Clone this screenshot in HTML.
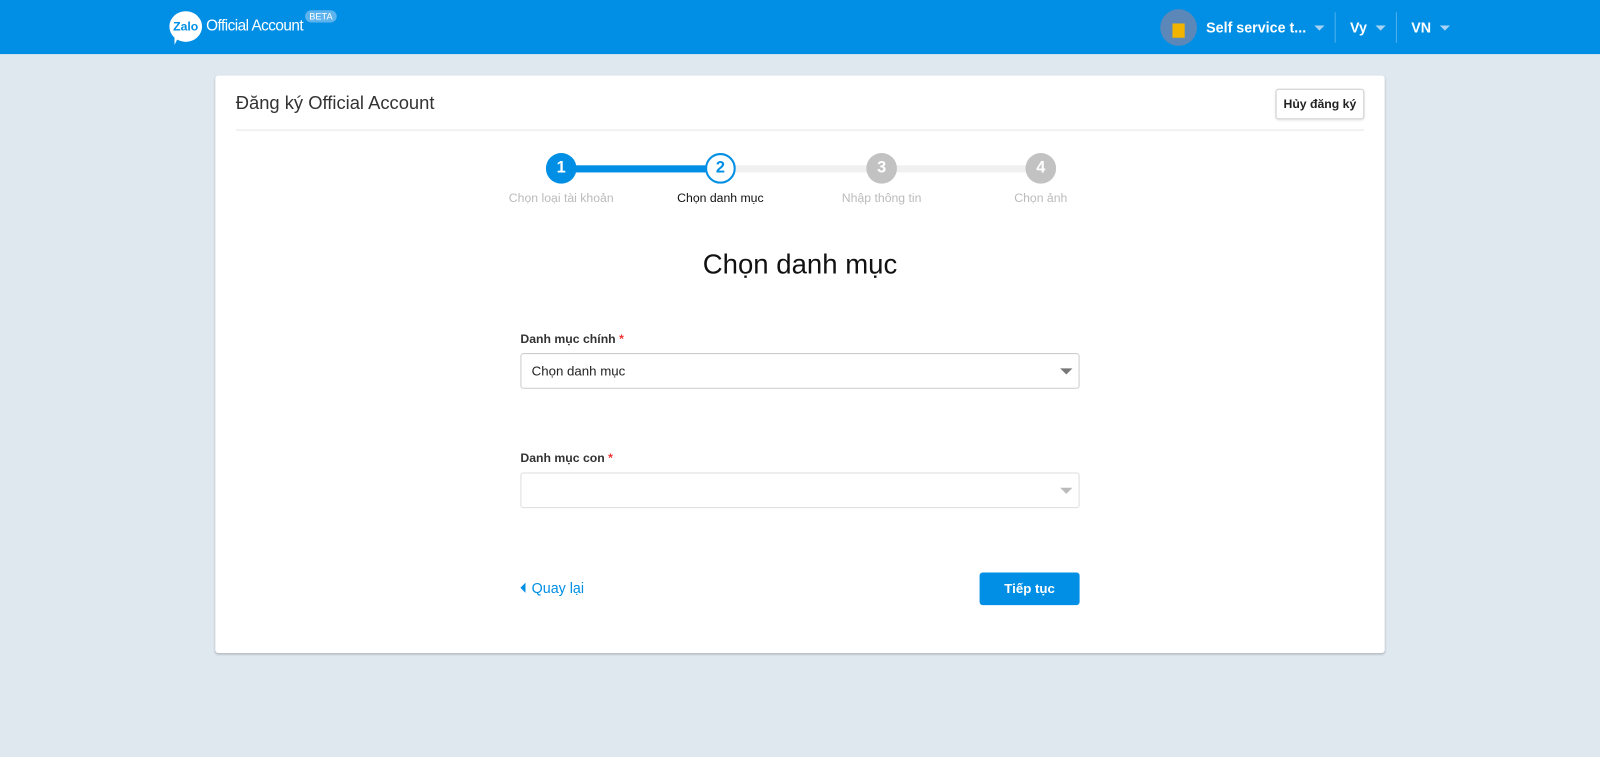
<!DOCTYPE html>
<html><head><meta charset="utf-8"><style>
*{box-sizing:border-box;margin:0;padding:0}
html,body{width:1600px;height:757px;overflow:hidden;background:#dfe7ef}
#w{position:absolute;left:0;top:0;width:1568px;height:742px;transform:scale(1.020408);transform-origin:0 0;font-family:"Liberation Sans",sans-serif}
.hdr{position:absolute;left:0;top:0;width:1568px;height:53px;background:#008fe5;color:#fff}
.abs{position:absolute}
.card{position:absolute;left:211px;top:74px;width:1146px;height:566px;background:#fff;border-radius:3px;box-shadow:0 1px 2px rgba(0,0,0,.2)}
.circ{position:absolute;width:30px;height:30px;border-radius:50%;color:#fff;font-weight:bold;font-size:16px;text-align:center;line-height:30px}
.lbl{position:absolute;font-size:12px;color:#bbb;text-align:center;width:160px;top:187px}
.sel{position:absolute;left:510px;width:548px;height:35px;border:1px solid #ccc;border-radius:3px;background:#fff;font-size:13px;color:#222;padding-left:10px;line-height:33px}
.arr{position:absolute;right:6px;top:14px;width:0;height:0;border-left:6px solid transparent;border-right:6px solid transparent;border-top:6px solid #777}
.fl{position:absolute;left:510px;font-size:12px;font-weight:bold;color:#333}
.fl span{color:#e33}
</style></head><body><div id="w">
<div class="hdr">
 <div class="abs" style="left:166px;top:11px;width:32px;height:30px;border-radius:50%;background:#fff;color:#008fe5;font-weight:bold;font-size:12px;text-align:center;line-height:30px">Zalo</div>
 <div class="abs" style="left:171px;top:36px;width:0;height:0;border-left:4px solid #fff;border-bottom:8px solid transparent"></div>
 <div class="abs" style="left:202px;top:17px;font-size:15px;letter-spacing:-0.5px">Official Account</div>
 <div class="abs" style="left:299px;top:10px;width:31px;height:12px;border-radius:6px;background:#5db3ee;font-size:9px;text-align:center;line-height:12px">BETA</div>
 <div class="abs" style="left:1137px;top:9px;width:36px;height:36px;border-radius:50%;background:#5b88b8"><div class="abs" style="left:12px;top:14px;width:12px;height:14px;background:#f2b400"></div></div>
 <div class="abs" style="left:1182px;top:19px;font-size:14px;font-weight:bold">Self service t...</div>
 <div class="abs" style="left:1288px;top:25px;border-left:5px solid transparent;border-right:5px solid transparent;border-top:5px solid #a9d3f3"></div>
 <div class="abs" style="left:1308px;top:12px;width:1px;height:30px;background:#4fb0ec"></div>
 <div class="abs" style="left:1323px;top:19px;font-size:14px;font-weight:bold">Vy</div>
 <div class="abs" style="left:1348px;top:25px;border-left:5px solid transparent;border-right:5px solid transparent;border-top:5px solid #a9d3f3"></div>
 <div class="abs" style="left:1368px;top:12px;width:1px;height:30px;background:#4fb0ec"></div>
 <div class="abs" style="left:1383px;top:19px;font-size:14px;font-weight:bold">VN</div>
 <div class="abs" style="left:1411px;top:25px;border-left:5px solid transparent;border-right:5px solid transparent;border-top:5px solid #a9d3f3"></div>
</div>
<div class="card"></div>
<div class="abs" style="left:231px;top:91px;font-size:18px;color:#333">Đăng ký Official Account</div>
<div class="abs" style="left:1250px;top:87px;width:87px;height:30px;border:1px solid #ccc;border-radius:3px;font-size:12px;font-weight:bold;text-align:center;line-height:28px;color:#222;box-shadow:0 1px 2px rgba(0,0,0,.1)">Hủy đăng ký</div>
<div class="abs" style="left:231px;top:127px;width:1106px;height:1px;background:#e6e6e6"></div>
<div class="abs" style="left:550px;top:162px;width:156px;height:7px;background:#008fe5"></div>
<div class="abs" style="left:706px;top:162px;width:314px;height:7px;background:#f0f0f0"></div>
<div class="circ" style="left:535px;top:150px;background:#008fe5">1</div>
<div class="circ" style="left:691px;top:150px;background:#fff;border:2px solid #008fe5;color:#008fe5;line-height:26px">2</div>
<div class="circ" style="left:849px;top:150px;background:#c2c2c2">3</div>
<div class="circ" style="left:1005px;top:150px;background:#c2c2c2">4</div>
<div class="lbl" style="left:470px">Chọn loại tài khoản</div>
<div class="lbl" style="left:626px;color:#111">Chọn danh mục</div>
<div class="lbl" style="left:784px">Nhập thông tin</div>
<div class="lbl" style="left:940px">Chọn ảnh</div>
<div class="abs" style="left:0;width:1568px;text-align:center;top:244px;font-size:27px;color:#111">Chọn danh mục</div>
<div class="fl" style="top:325px">Danh mục chính <span>*</span></div>
<div class="sel" style="top:346px">Chọn danh mục<div class="arr"></div></div>
<div class="fl" style="top:442px">Danh mục con <span>*</span></div>
<div class="sel" style="top:463px;border-color:#ddd"><div class="arr" style="border-top-color:#bbb"></div></div>
<div class="abs" style="left:510px;top:571px;border-top:5px solid transparent;border-bottom:5px solid transparent;border-right:5px solid #008fe5"></div>
<div class="abs" style="left:521px;top:568px;font-size:14px;color:#008fe5">Quay lại</div>
<div class="abs" style="left:960px;top:561px;width:98px;height:32px;background:#008fe5;border-radius:3px;color:#fff;font-weight:bold;font-size:13px;text-align:center;line-height:32px">Tiếp tục</div>
</div></body></html>
